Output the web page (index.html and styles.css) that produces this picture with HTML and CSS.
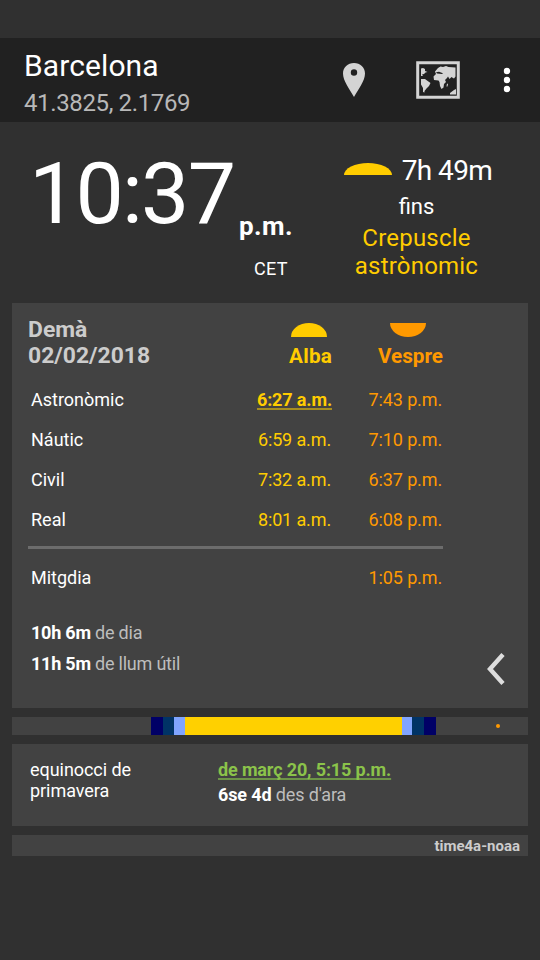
FILE: index.html
```
<!DOCTYPE html>
<html lang="ca"><head><meta charset="utf-8"><title>Barcelona</title><link rel="stylesheet" href="styles.css"></head>
<body>
<header class="bar">
  <div class="place"><h1>Barcelona</h1><p>41.3825, 2.1769</p></div>
  <svg class="pin" viewBox="0 0 22 34"><path fill="#d4d4d4" fill-rule="evenodd" d="M11 0C4.800 0 0 4.600 0 10.500C0 18 6.500 26 11 34C15.500 26 22 18 22 10.500C22 4.600 17.200 0 11 0ZM11 6.300a3.200 3.200 0 1 1 0 6.400a3.200 3.200 0 0 1 0-6.400Z"/></svg>
  <svg class="map" viewBox="0 0 44 38"><path fill="none" stroke="#d4d4d4" stroke-width="3" d="M1.700 1.700h40.600v34.600h-40.600z"/><path fill="#d4d4d4" d="M5 7.500l2-.5 2 1 0 2 2.500 1-2 .5-1.500 1.500-2 .5 1 1.500-2 0zM5 18l4 0 2 1.500 3.500 2.500-1.500 3-2.500 2.500-2 2.500 0 1.500-1.500-.5 0-4-2-3.500zM19 10.500l3-3.500 2.500-1.500 2.500.5 3-1 2.500 1 7 .500 0 9-1.500 2-1-.5-1.500-1-2 2-1.500-2.500-1 1.500-2 2 1 2-2 2-.500 3.500-2 1.500-1.500-3-.5-4-1-1.500-4.500-.500-.500-3.500 2.500-2.500zM31 22.500l1 .5-.5 2.500-1 0zM40 28v5.500h-6v-1.500l4-3z"/><path fill="#212121" d="M20 11.200l3-.5 4 1.500-1 .800-5-.5z"/></svg>
  <svg class="dots" viewBox="0 0 8 26"><g fill="#fff"><circle cx="4" cy="4" r="3.200"/><circle cx="4" cy="13" r="3.200"/><circle cx="4" cy="22" r="3.200"/></g></svg>
</header>
<section class="now">
  <div class="clock"><span class="time">10:37</span><span class="pm">p.m.</span><span class="zone">CET</span></div>
  <div class="next"><div class="left"><svg class="rise" viewBox="0 0 48 12"><path fill="#ffcc00" d="M0 12A24 12 0 0 1 48 12z"/></svg><span>7h 49m</span></div><p class="until">fins</p><p class="event">Crepuscle<br>astrònomic</p></div>
</section>
<main>
<section class="card day">
  <div class="row head"><div class="date">Demà<br>02/02/2018</div><div class="dawn"><svg viewBox="0 0 36 14"><path fill="#ffcc00" d="M0 14A18 14 0 0 1 36 14z"/></svg>Alba</div><div class="dusk"><svg viewBox="0 0 36 14"><path fill="#ff9900" d="M0 0A18 14 0 0 0 36 0z"/></svg>Vespre</div></div>
  <div class="row"><span>Astronòmic</span><span class="dawn mark">6:27 a.m.</span><span class="dusk">7:43 p.m.</span></div>
  <div class="row"><span>Náutic</span><span class="dawn">6:59 a.m.</span><span class="dusk">7:10 p.m.</span></div>
  <div class="row"><span>Civil</span><span class="dawn">7:32 a.m.</span><span class="dusk">6:37 p.m.</span></div>
  <div class="row"><span>Real</span><span class="dawn">8:01 a.m.</span><span class="dusk">6:08 p.m.</span></div>
  <hr>
  <div class="row"><span>Mitgdia</span><span></span><span class="dusk">1:05 p.m.</span></div>
  <div class="foot"><div class="lengths"><p><b>10h 6m</b> de dia</p><p><b>11h 5m</b> de llum útil</p></div>
  <svg class="back" viewBox="0 0 18 32"><path fill="none" stroke="#ddd" stroke-width="4.400" d="M16 1.500L3 16l13 14.500"/></svg></div>
</section>
<svg class="graph" viewBox="0 0 516 18"><path fill="#424242" d="M0 0h516v18H0z"/><path fill="#000066" d="M139 0h285v18H139z"/><path fill="#003366" d="M151 0h261v18H151z"/><path fill="#80a4ff" d="M162 0h238v18H162z"/><path fill="#ffd000" d="M173 0h217v18H173z"/><circle cx="486" cy="9" r="2" fill="#ff9900"/></svg>
<section class="card season"><div class="name">equinocci de primavera</div><div><div class="when">de març 20, 5:15 p.m.</div><div class="wait"><b>6se 4d</b> des d'ara</div></div></section>
<footer class="card source">time4a-noaa</footer>
</main>
</body></html>
```
FILE: styles.css
```
*{box-sizing:border-box}
body{margin:0;padding-top:38px;height:960px;background:#303030;color:#fff;font-family:Roboto,sans-serif;font-size:18px;overflow:hidden}
h1,p{margin:0;font-weight:400}
svg{display:block}
.bar{height:84px;background:#212121;display:flex;align-items:center;padding:0 29px 0 24px}
.place{flex:1;padding-top:7px}
.place h1{font-size:30px;line-height:38px;letter-spacing:.1px}
.place p{font-size:24px;line-height:36px;color:#b8b8b8;letter-spacing:-.37px}
.pin{width:22px;height:34px;margin-right:51px}
.map{width:44px;height:38px;margin-right:43px}
.dots{width:8px;height:26px}
.now{height:181px;display:flex}
.clock{width:300px;padding:20px 0 0 29px;display:grid;grid-template-columns:210px 1fr;grid-template-rows:99px 30px}
.time{font-size:86px;line-height:103px;white-space:nowrap;letter-spacing:-1.8px}
.pm{font-size:26px;font-weight:700;align-self:end;line-height:30px;letter-spacing:.4px}
.zone{grid-column:2;padding-left:15px;line-height:56px;letter-spacing:.3px}
.next{width:232px;padding-top:32px;text-align:center}
.left{display:flex;justify-content:center;align-items:center;gap:10px;font-size:28px;line-height:34px;letter-spacing:-.6px;padding-left:4px}
.rise{width:48px;height:12px;margin-top:-4px}
.until{font-size:22px;line-height:38px;padding-left:1px}
.event{font-size:24px;line-height:28px;color:#fc0;letter-spacing:.2px;margin-top:-2px;padding-left:1px}
main{padding:0 12px;display:flex;flex-direction:column;gap:9px}
.card{background:#424242}
.day{height:405px;padding:13px 16px 0}
.row{display:grid;grid-template-columns:191px 113px 111px;line-height:40px}
.row>span:first-child{padding-left:3px}
.dawn,.dusk{text-align:right;color:#fc0;letter-spacing:-.13px;padding-right:1px}
.dusk{color:#f90}
.mark{padding-right:0;font-weight:700;text-decoration:underline 2px #a58e20;text-underline-offset:2px;text-decoration-skip-ink:none}
.head{height:64px;font-size:22.900px;font-weight:700;line-height:26px}
.head .date{color:#ccc;padding-top:1px}
.head .dawn,.head .dusk{font-size:20.700px;padding-right:0;padding-top:7px;letter-spacing:0}
.head .dawn{letter-spacing:.2px}
.head svg{width:36px;height:14px;margin:0 5px 6px auto}
.head .dusk svg{margin-right:17px}
hr{width:415px;height:3px;border:0;background:#6c6c6c;margin:6px 0 9px}
.foot{display:flex;justify-content:space-between;padding:19px 7px 0 3px}
.lengths{line-height:31px;color:#bdbdbd;letter-spacing:-.22px}
b{color:#fff}
.back{width:18px;height:32px;margin-top:36px}
.graph{width:516px;height:18px}
.season{height:82px;padding:15px 18px;display:flex}
.name{width:188px;padding-right:60px;line-height:21px;letter-spacing:-.05px}
.when{font-weight:700;color:#8bc34a;text-decoration:underline 2px #6d9447;text-underline-offset:2px;text-decoration-skip-ink:none;line-height:22px;letter-spacing:-.14px}
.wait{line-height:28px;color:#bdbdbd;letter-spacing:-.13px}
.source{height:21px;padding-right:8px;text-align:right;font-size:15px;line-height:23px;font-weight:700;color:#ccc}
```
